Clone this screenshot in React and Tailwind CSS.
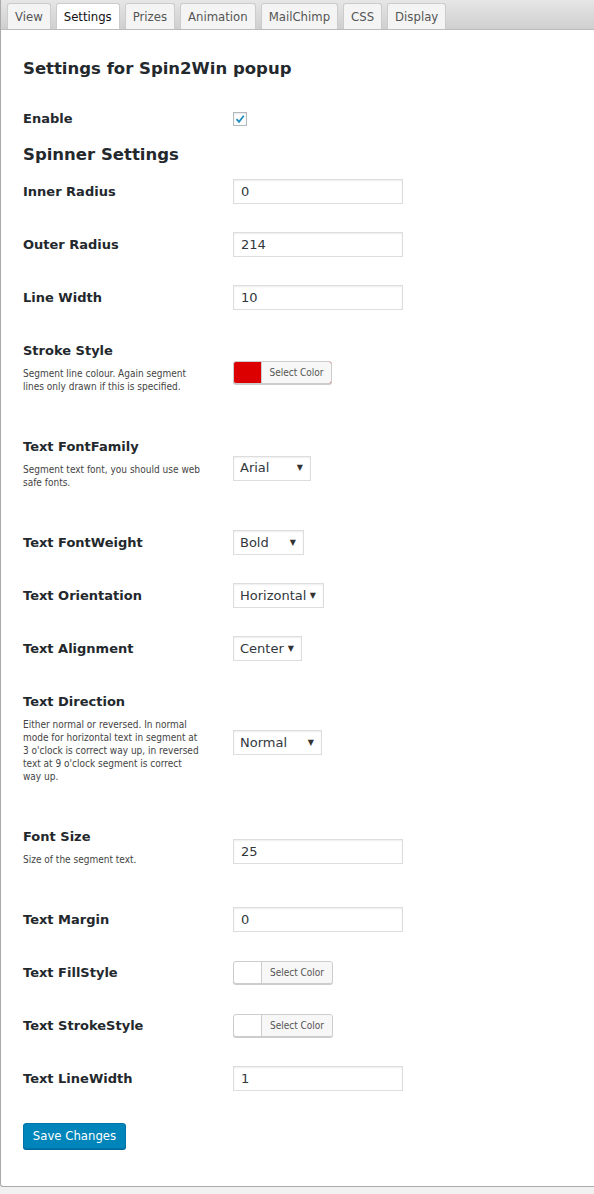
import React from "react";

const tabs = ["View", "Settings", "Prizes", "Animation", "MailChimp", "CSS", "Display"];

const Label = ({ title, desc }) => (
  <div className="w-[210px] shrink-0 py-[18px]">
    <div className="text-[13px] leading-[17px] font-bold text-[#23282d]">{title}</div>
    {desc && (
      <p className="w-[178px] mt-[8px] mb-[9px] text-[10px] leading-[13px] text-[#444] font-['DejaVu_Sans_Condensed','Liberation_Sans',sans-serif]">
        {desc}
      </p>
    )}
  </div>
);

const TextInput = ({ value }) => (
  <div className="w-[170px] h-[25px] border border-[#ddd] shadow-[inset_0_1px_2px_rgba(0,0,0,0.07)] bg-white pl-[7px] flex items-center text-[13px] text-[#32373c]">
    {value}
  </div>
);

const Select = ({ value, w }) => (
  <div
    className={`${w} h-[25px] border border-[#ddd] shadow-[inset_0_1px_2px_rgba(0,0,0,0.07)] bg-white pl-[6px] pr-[7px] flex items-center justify-between text-[13px] text-[#32373c]`}
  >
    <span>{value}</span>
    <span className="text-[8px] leading-none text-[#333]">▼</span>
  </div>
);

const ColorPicker = ({ color, w }) => (
  <div
    className={`${w} h-[23px] flex rounded-[3px] border border-[#ccc] shadow-[0_1px_0_#ccc] overflow-hidden`}
    style={{ backgroundColor: color }}
  >
    <div className="w-[27px] shrink-0" />
    <div className="flex-1 bg-[#f7f7f7] border-l border-[#ccc] flex items-center justify-center text-[10px] text-[#555] font-['DejaVu_Sans_Condensed','Liberation_Sans',sans-serif]">
      Select Color
    </div>
  </div>
);

const Row = ({ title, desc, children }) => (
  <div className="flex items-center">
    <Label title={title} desc={desc} />
    <div>{children}</div>
  </div>
);

export default function App() {
  return (
    <div className="min-h-screen bg-[#f1f1f1] font-['DejaVu_Sans',Verdana,sans-serif]">
      <div className="bg-white border-l border-b border-[#aaa] rounded-bl-[3px] pb-[37px]">
        {/* tab bar */}
        <div className="h-[30px] bg-gradient-to-b from-[#e6e6e6] to-[#cfcfcf] border-b border-[#bbb] flex items-end pl-[6px] gap-[5px]">
          {tabs.map((t) => (
            <div
              key={t}
              className={`h-[26px] px-[7px] flex items-center rounded-t-[3px] border border-b-0 border-[#ccc] text-[13px] font-['DejaVu_Sans_Condensed','Liberation_Sans',sans-serif] ${
                t === "Settings" ? "bg-white text-[#111]" : "bg-[#f4f4f4] text-[#555]"
              }`}
            >
              {t}
            </div>
          ))}
        </div>

        <div className="pl-[22px]">
          <h2 className="mt-[28px] text-[16.5px] leading-[22px] font-bold text-[#23282d]">
            Settings for Spin2Win popup
          </h2>

          <div className="mt-[12px]">
            <Row title="Enable">
              <div className="w-[14px] h-[14px] border border-[#b4b9be] bg-white shadow-[inset_0_1px_2px_rgba(0,0,0,0.1)] flex items-center justify-center">
                <svg width="12" height="12" viewBox="0 0 12 12">
                  <path d="M2.5 6.2 L5 8.8 L9.8 2.8" fill="none" stroke="#1e8cbe" strokeWidth="1.8" />
                </svg>
              </div>
            </Row>

            <h3 className="text-[16.5px] leading-[20px] font-bold text-[#23282d]">Spinner Settings</h3>

            <Row title="Inner Radius">
              <TextInput value="0" />
            </Row>
            <Row title="Outer Radius">
              <TextInput value="214" />
            </Row>
            <Row title="Line Width">
              <TextInput value="10" />
            </Row>
            <Row
              title="Stroke Style"
              desc="Segment line colour. Again segment lines only drawn if this is specified."
            >
              <ColorPicker color="#dd0000" w="w-[99px]" />
            </Row>
            <Row title="Text FontFamily" desc="Segment text font, you should use web safe fonts.">
              <Select value="Arial" w="w-[78px]" />
            </Row>
            <Row title="Text FontWeight">
              <Select value="Bold" w="w-[71px]" />
            </Row>
            <Row title="Text Orientation">
              <Select value="Horizontal" w="w-[91px]" />
            </Row>
            <Row title="Text Alignment">
              <Select value="Center" w="w-[69px]" />
            </Row>
            <Row
              title="Text Direction"
              desc="Either normal or reversed. In normal mode for horizontal text in segment at 3 o'clock is correct way up, in reversed text at 9 o'clock segment is correct way up."
            >
              <Select value="Normal" w="w-[89px]" />
            </Row>
            <Row title="Font Size" desc="Size of the segment text.">
              <TextInput value="25" />
            </Row>
            <Row title="Text Margin">
              <TextInput value="0" />
            </Row>
            <Row title="Text FillStyle">
              <ColorPicker color="#ffffff" w="w-[100px]" />
            </Row>
            <Row title="Text StrokeStyle">
              <ColorPicker color="#ffffff" w="w-[100px]" />
            </Row>
            <Row title="Text LineWidth">
              <TextInput value="1" />
            </Row>
          </div>

          <button className="mt-[18px] h-[26px] w-[103px] rounded-[3px] bg-[#0085ba] border border-[#0073aa] shadow-[0_1px_0_#006799] text-white text-[13px] font-['DejaVu_Sans_Condensed','Liberation_Sans',sans-serif]">
            Save Changes
          </button>
        </div>
      </div>
    </div>
  );
}
